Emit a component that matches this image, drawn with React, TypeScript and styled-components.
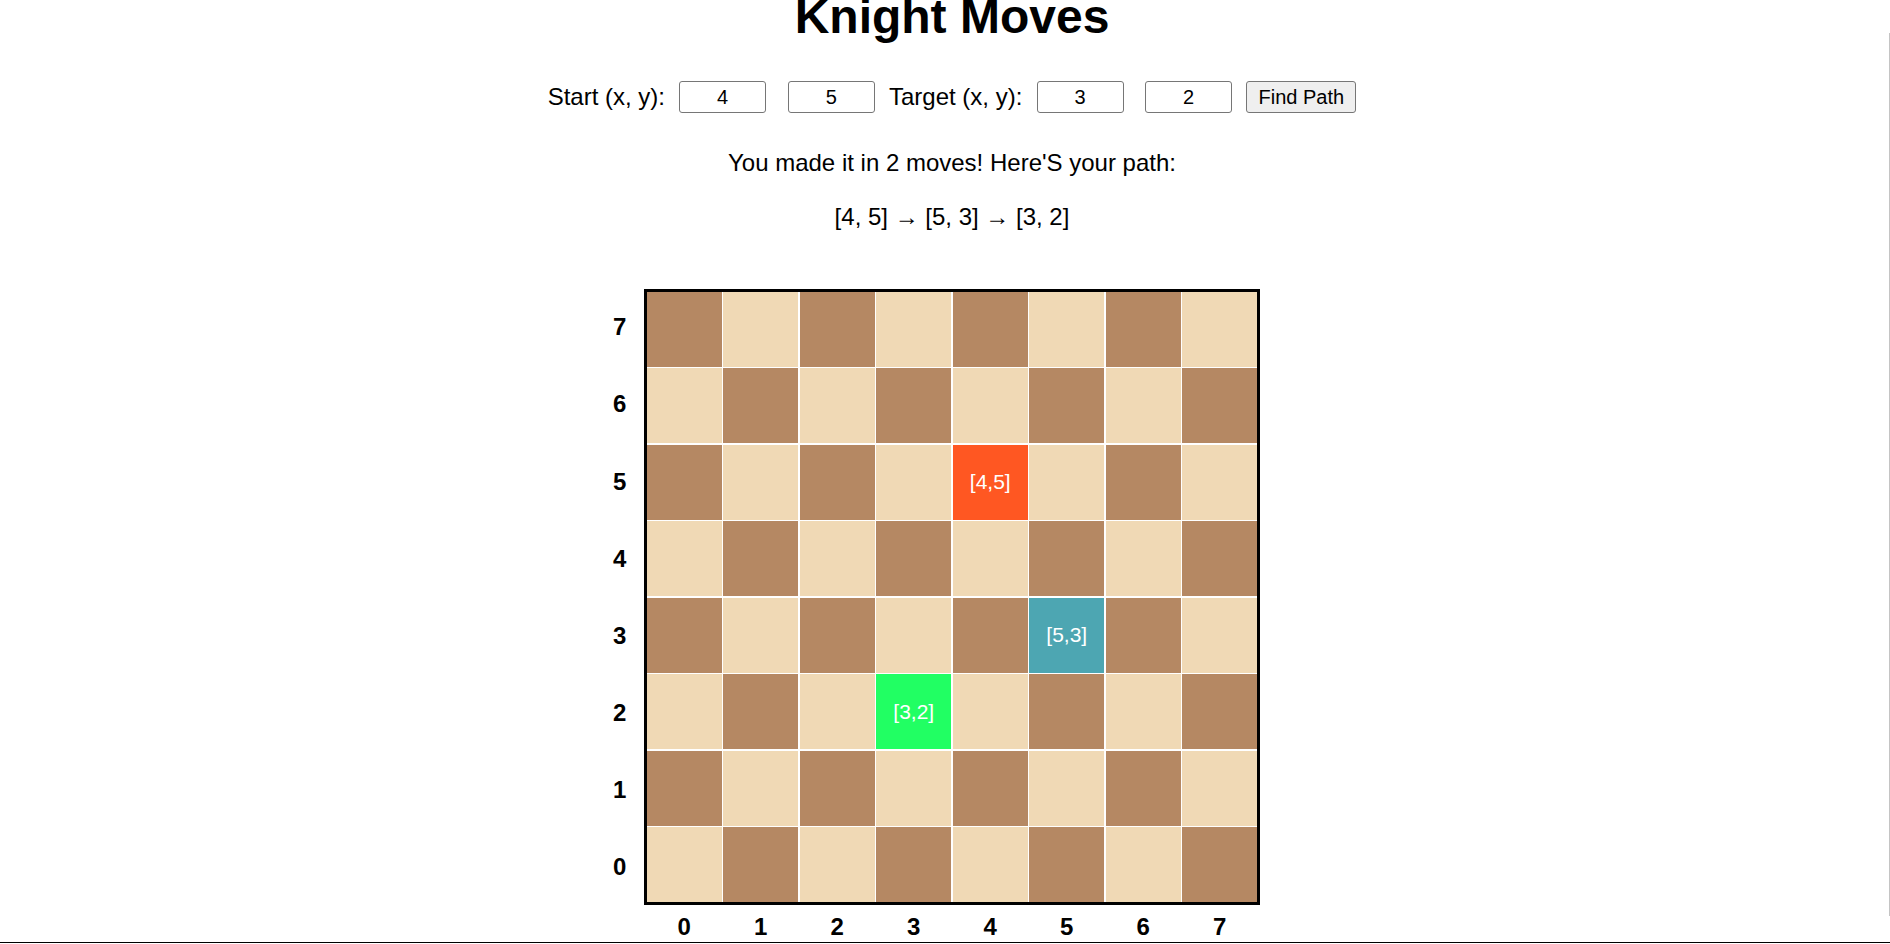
import * as React from 'react';
import styled, { createGlobalStyle } from 'styled-components';

type Square = [number, number];

const SIZE = 8;
const CELL = 75;
const LINE = 1.5;
const EDGE = 3;
const BOARD = CELL * SIZE + LINE * (SIZE - 1) + EDGE * 2;

const START: Square = [4, 5];
const TARGET: Square = [3, 2];
const PATH: Square[] = [[4, 5], [5, 3], [3, 2]];

const GlobalStyle = createGlobalStyle`
  html, body {
    margin: 0;
    padding: 0;
    background: #fff;
    overflow: hidden;
  }
  body {
    font-family: "Liberation Sans", Arial, sans-serif;
    font-size: 24px;
    color: #000;
  }
`;

const Page = styled.div`
  width: 100%;
  height: 944px;
  display: flex;
  flex-direction: column;
`;

const Main = styled.main`
  padding-left: 14px;
  text-align: center;
`;

const Title = styled.h1`
  margin: -11px 0 0;
  font-size: 48px;
  line-height: 55px;
  font-weight: 700;
`;

const Controls = styled.div`
  margin-top: 37px;
  height: 32px;
  display: flex;
  justify-content: center;
  align-items: center;
  gap: 6.67px;
`;

const Label = styled.span`
  white-space: nowrap;
  line-height: 28px;
`;

const CoordInput = styled.input`
  box-sizing: border-box;
  width: 87px;
  height: 31.5px;
  margin: 0 7.5px;
  padding: 1.5px 3px;
  border: 1.5px solid #767676;
  border-radius: 3px;
  background: #fff;
  font-family: "Liberation Sans", Arial, sans-serif;
  font-size: 20px;
  text-align: center;
  color: #000;
`;

const FindButton = styled.button`
  box-sizing: border-box;
  width: 110px;
  height: 32px;
  padding: 1.5px 9px;
  border: 1.5px solid #767676;
  border-radius: 3px;
  background: #efefef;
  font-family: "Liberation Sans", Arial, sans-serif;
  font-size: 20px;
  color: #000;
`;

const Message = styled.p<{ $top: number }>`
  margin: ${({ $top }) => $top}px 0 0;
  line-height: 27.6px;
`;

const BoardArea = styled.div`
  margin-top: 58.5px;
  display: grid;
  grid-template-columns: 48px ${BOARD}px 48px;
  justify-content: center;
  row-gap: 7.5px;
`;

const RankLabels = styled.div`
  display: flex;
  flex-direction: column;
  height: ${BOARD}px;
`;

const FileLabels = styled.div`
  grid-column: 2;
  display: flex;
  padding: 0 ${EDGE}px;
  gap: ${LINE}px;
`;

const AxisLabel = styled.span`
  flex: 1;
  display: flex;
  align-items: center;
  justify-content: center;
  font-weight: 700;
  font-size: 24px;
  line-height: 27.6px;
`;

const Board = styled.div`
  box-sizing: border-box;
  width: ${BOARD}px;
  height: ${BOARD}px;
  border: ${EDGE}px solid #000;
  background: #fff;
  display: grid;
  grid-template-columns: repeat(${SIZE}, ${CELL}px);
  grid-template-rows: repeat(${SIZE}, ${CELL}px);
  gap: ${LINE}px;
`;

type Tone = 'dark' | 'light' | 'start' | 'step' | 'target';

const TONES: Record<Tone, string> = {
  dark: '#b58863',
  light: '#f0d9b5',
  start: '#ff5722',
  step: '#4da6b2',
  target: '#21ff63',
};

const Cell = styled.div<{ $tone: Tone }>`
  display: flex;
  align-items: center;
  justify-content: center;
  background: ${({ $tone }) => TONES[$tone]};
  color: #fff;
  font-size: 21px;
`;

const Footer = styled.footer`
  margin-top: 1.5px;
  border-top: 1.5px solid #000;
`;

const ScrollThumb = styled.div`
  position: fixed;
  top: 33px;
  right: 0;
  width: 1.5px;
  height: 883px;
  background: #c4c4c4;
`;

const same = (a: Square, b: Square) => a[0] === b[0] && a[1] === b[1];

const toneOf = (x: number, y: number): Tone => {
  const sq: Square = [x, y];
  if (same(sq, START)) return 'start';
  if (same(sq, TARGET)) return 'target';
  if (PATH.some((p) => same(p, sq))) return 'step';
  return (x + y) % 2 === 1 ? 'dark' : 'light';
};

const ranks = Array.from({ length: SIZE }, (_, i) => SIZE - 1 - i);
const files = Array.from({ length: SIZE }, (_, i) => i);

const App: React.FC = () => {
  const [start, setStart] = React.useState<Square>(START);
  const [target, setTarget] = React.useState<Square>(TARGET);

  return (
    <Page>
      <GlobalStyle />
      <Main>
        <Title>Knight Moves</Title>
        <Controls>
          <Label>Start (x, y):</Label>
          <CoordInput
            type="text"
            value={start[0]}
            onChange={(e) => setStart([Number(e.target.value), start[1]])}
          />
          <CoordInput
            type="text"
            value={start[1]}
            onChange={(e) => setStart([start[0], Number(e.target.value)])}
          />
          <Label>Target (x, y):</Label>
          <CoordInput
            type="text"
            value={target[0]}
            onChange={(e) => setTarget([Number(e.target.value), target[1]])}
          />
          <CoordInput
            type="text"
            value={target[1]}
            onChange={(e) => setTarget([target[0], Number(e.target.value)])}
          />
          <FindButton type="button">Find Path</FindButton>
        </Controls>
        <Message $top={36}>You made it in {PATH.length - 1} moves! Here'S your path:</Message>
        <Message $top={26}>{PATH.map((p) => `[${p[0]}, ${p[1]}]`).join(' → ')}</Message>
        <BoardArea>
          <RankLabels>
            {ranks.map((r) => (
              <AxisLabel key={r}>{r}</AxisLabel>
            ))}
          </RankLabels>
          <Board>
            {ranks.map((y) =>
              files.map((x) => {
                const tone = toneOf(x, y);
                const marked = tone !== 'dark' && tone !== 'light';
                return (
                  <Cell key={`${x}-${y}`} $tone={tone}>
                    {marked ? `[${x},${y}]` : null}
                  </Cell>
                );
              })
            )}
          </Board>
          <span />
          <FileLabels>
            {files.map((f) => (
              <AxisLabel key={f}>{f}</AxisLabel>
            ))}
          </FileLabels>
        </BoardArea>
      </Main>
      <Footer />
      <ScrollThumb />
    </Page>
  );
};

export default App;
